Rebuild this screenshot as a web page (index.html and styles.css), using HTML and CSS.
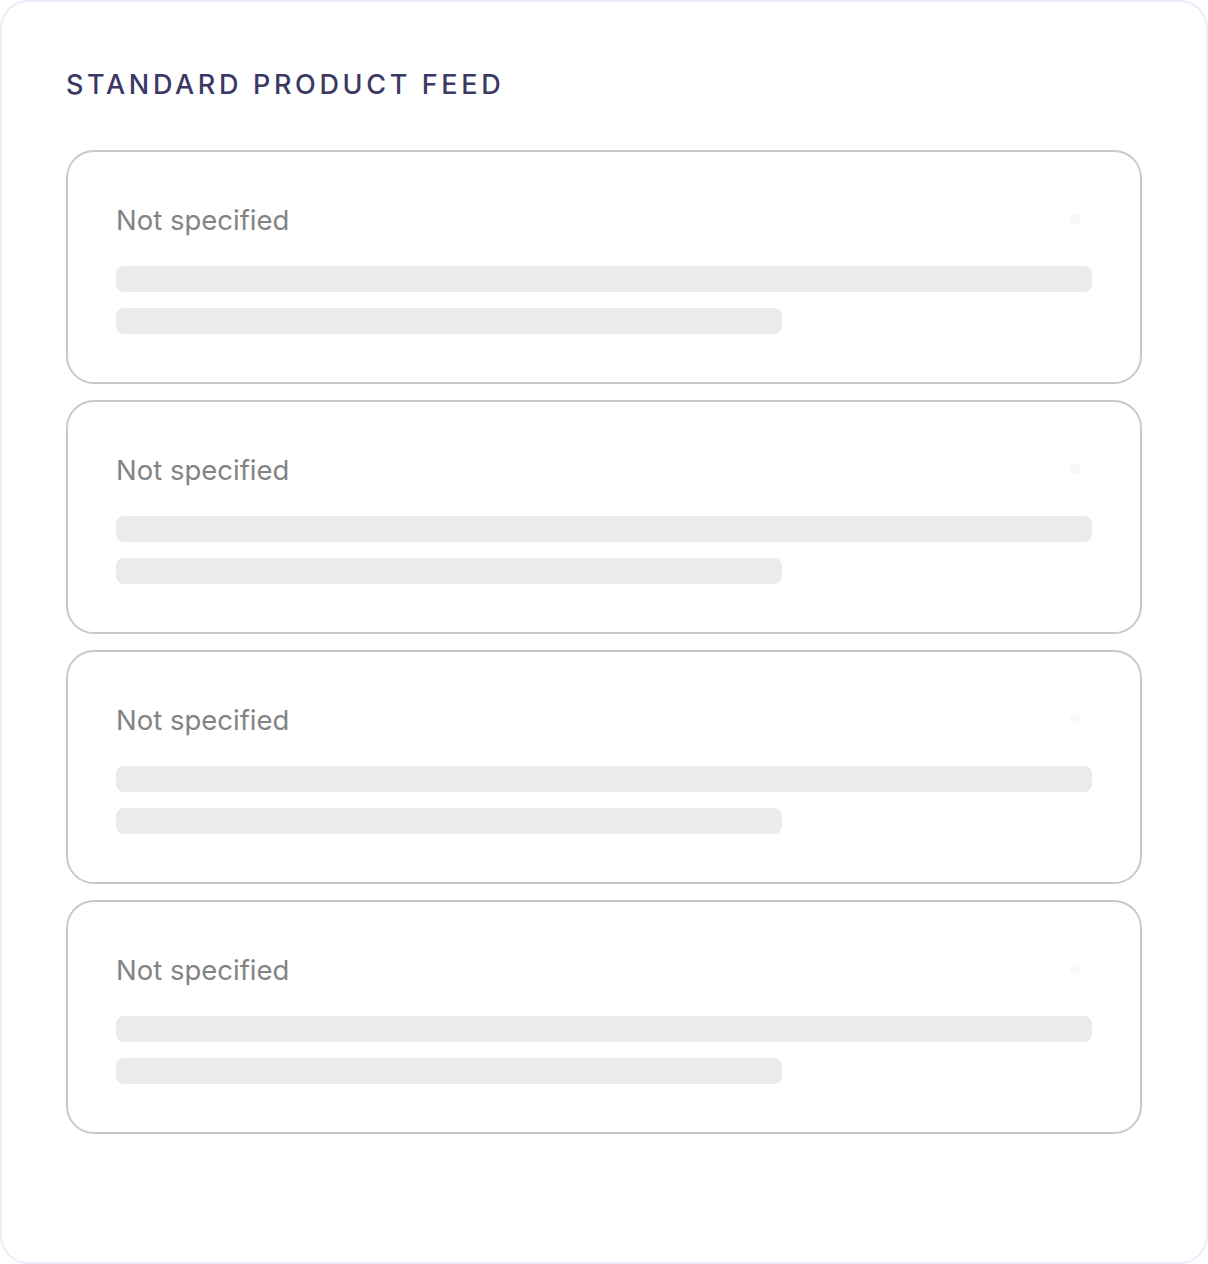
FILE: index.html
```html
<!DOCTYPE html>
<html lang="en">
<head>
<meta charset="utf-8">
<title>Standard Product Feed</title>
<link rel="stylesheet" href="styles.css">
</head>
<body>
<section class="panel">
  <h2 class="panel-title">STANDARD PRODUCT FEED</h2>
  <div class="list">
    <div class="item">
      <span class="dot"></span>
      <p class="label">Not specified</p>
      <div class="bar bar-full"></div>
      <div class="bar bar-short"></div>
    </div>
    <div class="item">
      <span class="dot"></span>
      <p class="label">Not specified</p>
      <div class="bar bar-full"></div>
      <div class="bar bar-short"></div>
    </div>
    <div class="item">
      <span class="dot"></span>
      <p class="label">Not specified</p>
      <div class="bar bar-full"></div>
      <div class="bar bar-short"></div>
    </div>
    <div class="item">
      <span class="dot"></span>
      <p class="label">Not specified</p>
      <div class="bar bar-full"></div>
      <div class="bar bar-short"></div>
    </div>
  </div>
</section>
</body>
</html>
```
FILE: styles.css
```css
* { box-sizing: border-box; }
html, body { margin: 0; padding: 0; background: #ffffff; }
body { font-family: Inter, "Noto Sans", sans-serif; }

.panel {
  width: 1208px;
  height: 1264px;
  border: 2px solid #eeebfb;
  border-radius: 28px;
  padding: 64px 64px 0 64px;
  background: #ffffff;
}

.panel-title {
  margin: 0 0 47px 0;
  font-size: 27px;
  line-height: 37px;
  font-weight: 500;
  letter-spacing: 3.65px;
  color: #3b3964;
}

.list {
  display: flex;
  flex-direction: column;
  gap: 16px;
}

.item {
  position: relative;
  height: 234px;
  border: 2px solid #c9c9c9;
  border-radius: 28px;
  padding: 48px;
  display: flex;
  flex-direction: column;
}

.dot {
  position: absolute;
  top: 62px;
  right: 60px;
  width: 10px;
  height: 10px;
  border-radius: 50%;
  background: #f8f8f8;
}

.label {
  margin: 0 0 26px 0;
  font-size: 27.5px;
  line-height: 40px;
  font-weight: 400;
  color: #838383;
}

.bar {
  height: 26px;
  border-radius: 8px;
  background: #ebebeb;
}

.bar-full { width: 976px; margin-bottom: 16px; }
.bar-short { width: 666px; }
```
